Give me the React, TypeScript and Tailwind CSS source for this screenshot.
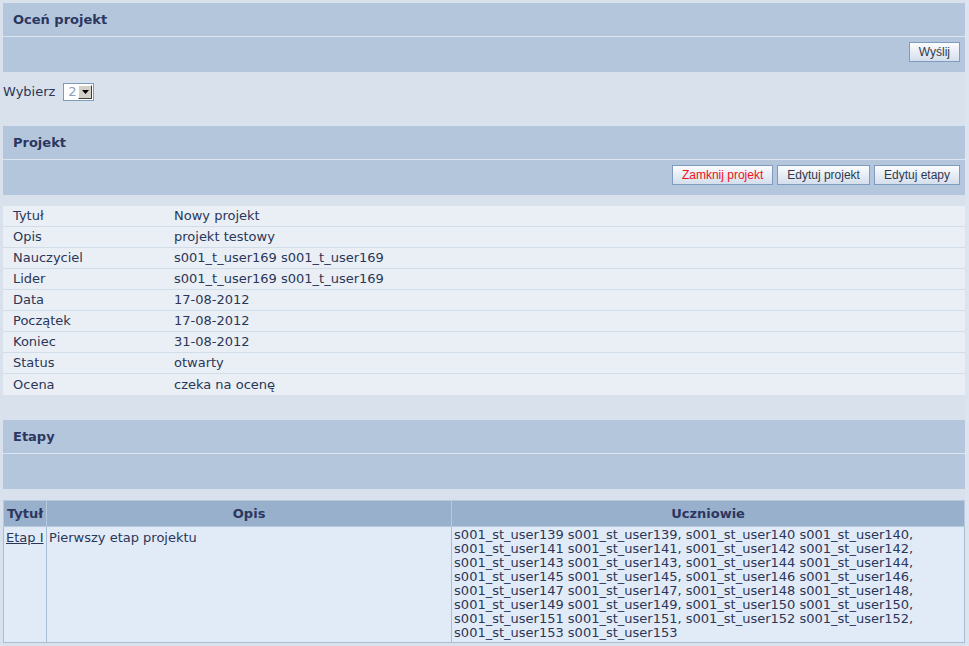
import React from 'react'

const info: [string, string][] = [
  ['Tytuł', 'Nowy projekt'],
  ['Opis', 'projekt testowy'],
  ['Nauczyciel', 's001_t_user169 s001_t_user169'],
  ['Lider', 's001_t_user169 s001_t_user169'],
  ['Data', '17-08-2012'],
  ['Początek', '17-08-2012'],
  ['Koniec', '31-08-2012'],
  ['Status', 'otwarty'],
  ['Ocena', 'czeka na ocenę'],
]

const students = [
  's001_st_user139 s001_st_user139, s001_st_user140 s001_st_user140,',
  's001_st_user141 s001_st_user141, s001_st_user142 s001_st_user142,',
  's001_st_user143 s001_st_user143, s001_st_user144 s001_st_user144,',
  's001_st_user145 s001_st_user145, s001_st_user146 s001_st_user146,',
  's001_st_user147 s001_st_user147, s001_st_user148 s001_st_user148,',
  's001_st_user149 s001_st_user149, s001_st_user150 s001_st_user150,',
  's001_st_user151 s001_st_user151, s001_st_user152 s001_st_user152,',
  's001_st_user153 s001_st_user153',
]

function Btn({ children, red }: { children: React.ReactNode; red?: boolean }) {
  return (
    <button
      className={`h-[20px] px-[9px] border border-[#7f9bc0] bg-gradient-to-b from-[#fbfcfe] to-[#d4dfec] text-[12px] leading-none ${red ? 'text-[#ee1122]' : 'text-[#303850]'}`}
      style={{ fontFamily: '"Liberation Sans", Tahoma, sans-serif' }}
    >
      {children}
    </button>
  )
}

function Panel({ title, children }: { title: string; children?: React.ReactNode }) {
  return (
    <div className="bg-[#b4c6dc]">
      <div className="h-[34px] px-[10px] flex items-center font-bold text-[#2c3760] border-b border-[#dde6f0]">
        {title}
      </div>
      <div className="h-[35px] flex items-start justify-end gap-[4px] pr-[5px] pt-[5px]">{children}</div>
    </div>
  )
}

export default function App() {
  return (
    <div
      className="min-h-[646px] w-[969px] bg-[#d9e2ec] text-[13px] text-[#2b3658] flex"
      style={{ fontFamily: '"DejaVu Sans", Verdana, sans-serif' }}
    >
      <div className="w-[965px] pl-[3px] pt-[3px]">
        <Panel title="Oceń projekt">
          <Btn>Wyślij</Btn>
        </Panel>

        {/* Wybierz */}
        <div className="flex items-center h-[18px] mt-[11px] mb-[25px] -ml-[3px] pl-[3px]">
          <span className="mr-[8px]">Wybierz</span>
          <div className="flex h-[18px] w-[31px] border border-[#7f9db9] bg-white">
            <span className="flex-1 pl-[4px] text-[#8aa0bc] leading-[16px]">2</span>
            <span className="w-[15px] m-[1px] bg-[#d4d0c8] border border-t-white border-l-white border-r-[#404040] border-b-[#404040] flex items-center justify-center">
              <svg width="7" height="4" viewBox="0 0 7 4"><path d="M0 0h7L3.5 4z" fill="#000" /></svg>
            </span>
          </div>
        </div>

        <Panel title="Projekt">
          <Btn red>Zamknij projekt</Btn>
          <Btn>Edytuj projekt</Btn>
          <Btn>Edytuj etapy</Btn>
        </Panel>

        {/* Info */}
        <div className="mt-[11px] bg-[#e9eff5]">
          {info.map(([k, v], i) => (
            <div
              key={k}
              className={`flex h-[21px] items-center ${i < info.length - 1 ? 'border-b border-[#d2ddea]' : ''}`}
            >
              <span className="w-[171px] pl-[10px]">{k}</span>
              <span>{v}</span>
            </div>
          ))}
        </div>

        <div className="mt-[25px]">
          <Panel title="Etapy" />
        </div>

        {/* Etapy table */}
        <table className="mt-[11px] w-[962px] border-collapse border border-[#a9bdd5] bg-[#e1ebf7]">
          <thead>
            <tr className="bg-[#98b0cc] h-[26px] font-bold text-[#2c3760]">
              <th className="w-[43px] border border-[#b8c9dd] px-[3px]">Tytuł</th>
              <th className="w-[405px] border border-[#b8c9dd]">Opis</th>
              <th className="border border-[#b8c9dd]">Uczniowie</th>
            </tr>
          </thead>
          <tbody>
            <tr className="align-top">
              <td className="border border-[#a9bdd5] px-[2px] pt-[1px] whitespace-nowrap">
                <a href="#" className="underline">Etap I</a>
              </td>
              <td className="border border-[#a9bdd5] px-[2px] pt-[1px]">Pierwszy etap projektu</td>
              <td className="border border-[#a9bdd5] px-[2px] pt-[1px] pb-[2px] leading-[14px] whitespace-nowrap">
                {students.map((s) => (
                  <div key={s}>{s}</div>
                ))}
              </td>
            </tr>
          </tbody>
        </table>
      </div>
      <div className="flex-1 bg-[#dce5ef]" />
    </div>
  )
}
